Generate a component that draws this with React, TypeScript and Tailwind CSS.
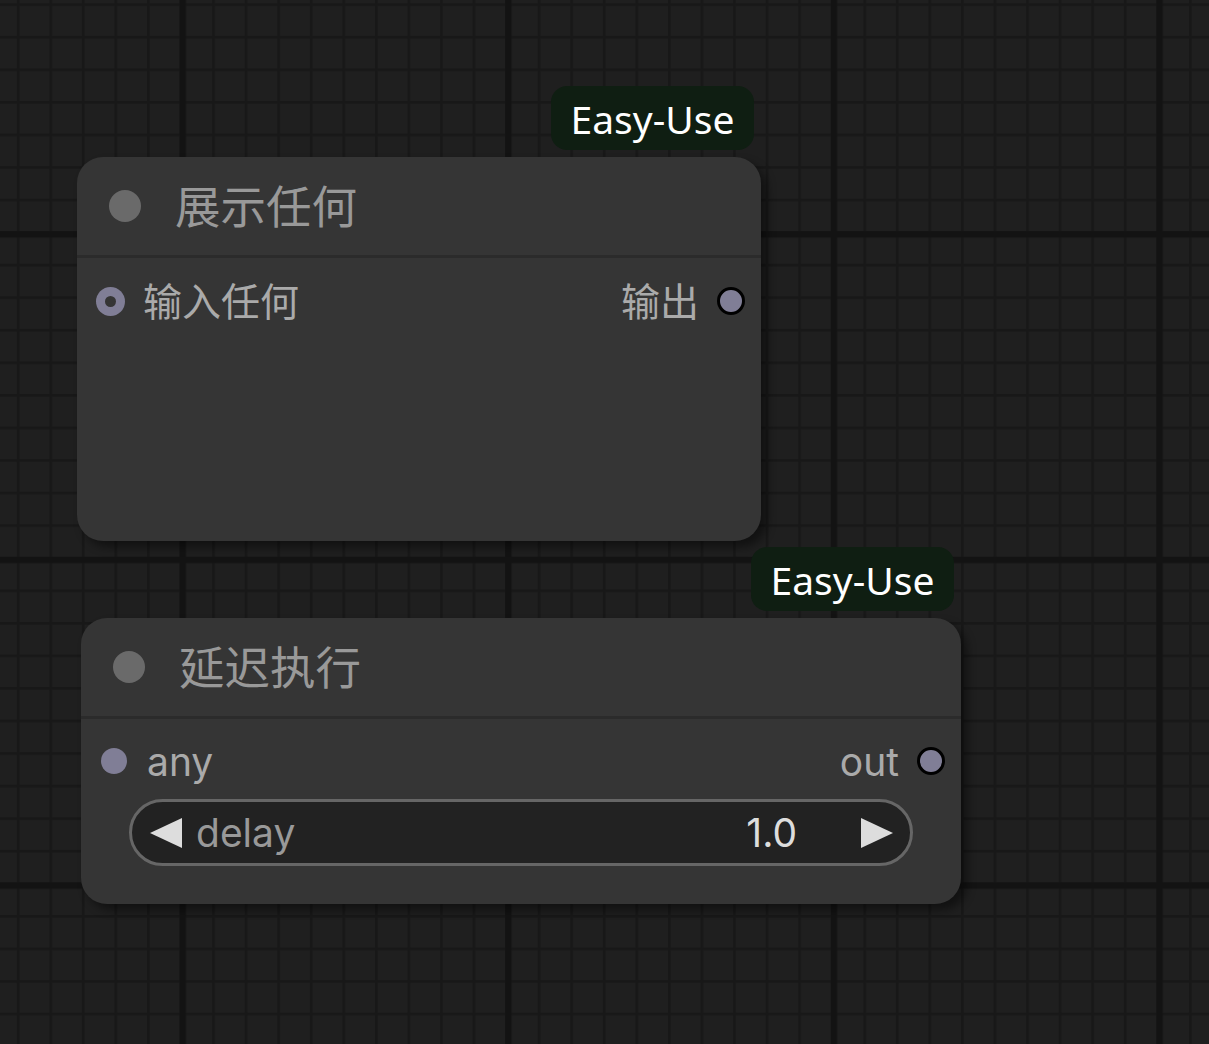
import React from 'react';

const CJK = "font-['Noto_Sans_CJK_SC','Noto_Sans',sans-serif]";
const LABEL = "font-['Inter','Noto_Sans_CJK_SC',sans-serif]";

function GridBackground() {
  return (
    <svg className="absolute inset-0" width={1209} height={1044}>
      <defs>
        <pattern id="minor" patternUnits="userSpaceOnUse" x={16.8} y={3.3} width={32.56} height={32.56}>
          <rect x={0} y={0} width={2.8} height={32.56} fill="#181818" />
          <rect x={0} y={0} width={32.56} height={2.8} fill="#181818" />
        </pattern>
        <pattern id="major" patternUnits="userSpaceOnUse" x={179.6} y={231.2} width={325.6} height={325.6}>
          <rect x={0} y={0} width={6.4} height={325.6} fill="#131313" />
          <rect x={0} y={0} width={325.6} height={6.4} fill="#131313" />
        </pattern>
      </defs>
      <rect width="100%" height="100%" fill="#1f1f1f" />
      <rect width="100%" height="100%" fill="url(#minor)" />
      <rect width="100%" height="100%" fill="url(#major)" />
    </svg>
  );
}

function Badge() {
  return (
    <div className="absolute right-[7px] bottom-[calc(100%+7px)] w-[203px] h-[64px] rounded-[16px] bg-[#0f1e12] flex items-center justify-center">
      <span className="font-['Noto_Sans',sans-serif] text-[39px] leading-none text-white">Easy-Use</span>
    </div>
  );
}

function NodeTitle({ title }: { title: string }) {
  return (
    <>
      <div className="h-[98px] flex items-center pl-[32px]">
        <div className="w-[32px] h-[32px] rounded-full bg-[#6a6a6a]" />
        <span className={`${CJK} ml-[34px] text-[45.5px] leading-none text-[#999] pb-[2px]`}>{title}</span>
      </div>
      <div className="h-[3px] bg-[#2b2b2b]" />
    </>
  );
}

function SlotRow({ input, output, hollow }: { input: string; output: string; hollow?: boolean }) {
  return (
    <div className="h-[58px] flex items-center">
      <div className="w-[66px] flex justify-center">
        {hollow ? (
          <div className="w-[29px] h-[29px] rounded-full bg-[#807e96] flex items-center justify-center">
            <div className="w-[11px] h-[11px] rounded-full bg-[#353535]" />
          </div>
        ) : (
          <div className="w-[26px] h-[26px] rounded-full bg-[#807e96]" />
        )}
      </div>
      <span className={`${LABEL} text-[39px] leading-none text-[#aaa]`}>{input}</span>
      <span className={`${LABEL} ml-auto pr-[2px] text-[39px] leading-none text-[#aaa]`}>{output}</span>
      <div className="w-[60px] flex justify-center">
        <div className="w-[28px] h-[28px] rounded-full bg-[#807e96] border-[3px] border-black" />
      </div>
    </div>
  );
}

function NumberWidget({ label, value }: { label: string; value: string }) {
  return (
    <div className="mx-[48px] h-[67px] rounded-full border-[3px] border-[#666] bg-[#222] flex items-center pl-[18px] pr-[17px]">
      <svg width={32} height={30} viewBox="0 0 32 30">
        <polygon points="0,15 32,0 32,30" fill="#ddd" />
      </svg>
      <span className={`${LABEL} ml-[14px] text-[39px] leading-none text-[#999]`}>{label}</span>
      <span className={`${LABEL} ml-auto text-[39px] leading-none text-[#ddd]`}>{value}</span>
      <svg className="ml-[64px]" width={32} height={30} viewBox="0 0 32 30">
        <polygon points="32,15 0,0 0,30" fill="#ddd" />
      </svg>
    </div>
  );
}

export default function App() {
  return (
    <div className="relative w-[1209px] h-[1044px] overflow-hidden bg-[#1f1f1f]">
      <GridBackground />

      {/* 展示任何 */}
      <div className="absolute left-[77px] top-[157px] w-[684px] h-[384px] rounded-[26px] bg-[#353535] shadow-[6px_6px_10px_rgba(0,0,0,0.45)] flex flex-col">
        <Badge />
        <NodeTitle title="展示任何" />
        <div className="pt-[14px]">
          <SlotRow input="输入任何" output="输出" hollow />
        </div>
      </div>

      {/* 延迟执行 */}
      <div className="absolute left-[81px] top-[618px] w-[880px] h-[286px] rounded-[26px] bg-[#353535] shadow-[6px_6px_10px_rgba(0,0,0,0.45)] flex flex-col">
        <Badge />
        <NodeTitle title="延迟执行" />
        <div className="pt-[13px] flex flex-col gap-[9px]">
          <SlotRow input="any" output="out" />
          <NumberWidget label="delay" value="1.0" />
        </div>
      </div>
    </div>
  );
}
